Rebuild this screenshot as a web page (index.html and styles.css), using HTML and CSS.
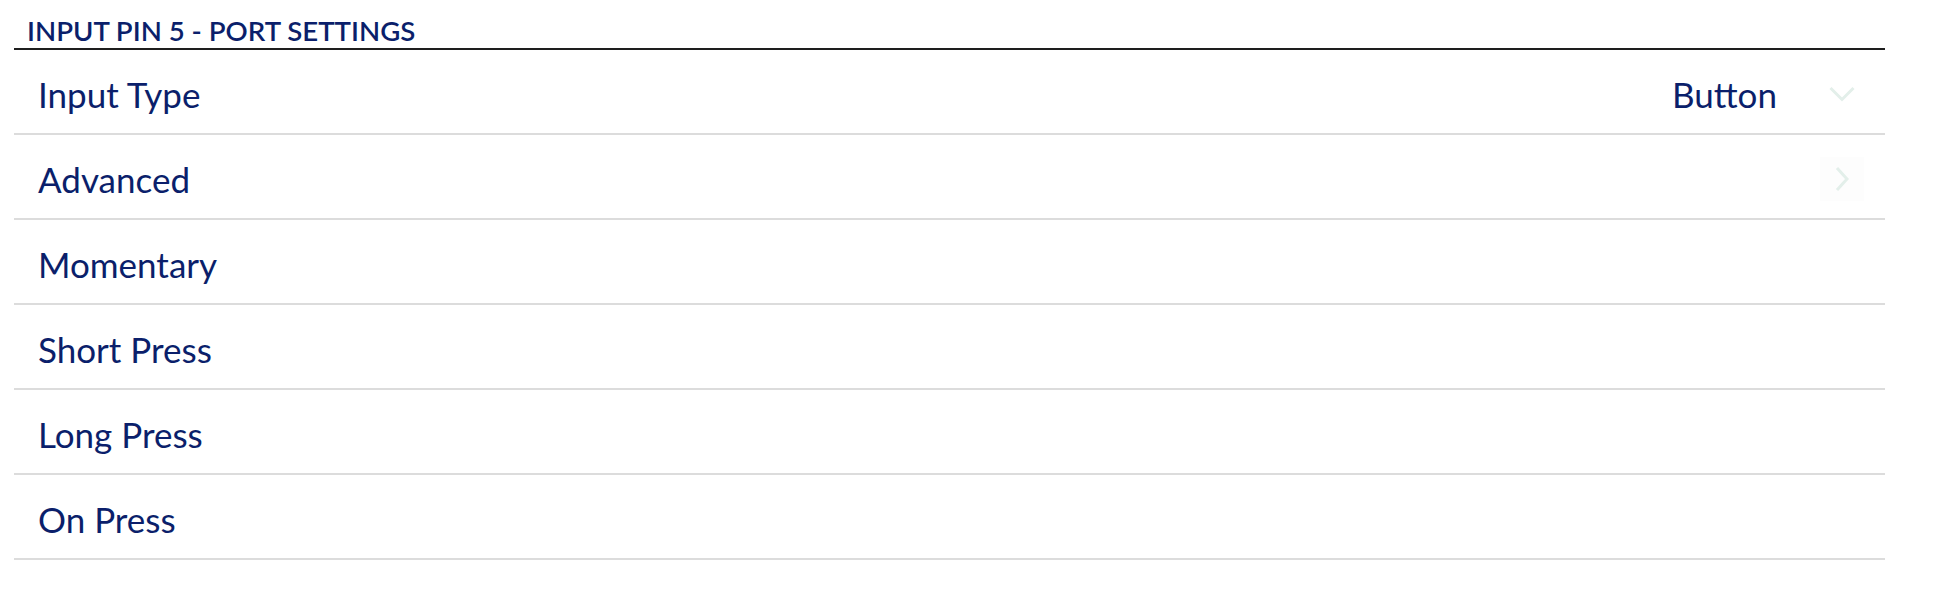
FILE: index.html
```html
<!DOCTYPE html>
<html>
<head>
<meta charset="utf-8">
<link rel="stylesheet" href="styles.css">
</head>
<body>
<div class="panel">
  <div class="section-title">INPUT PIN 5 - PORT SETTINGS</div>
  <div class="row">
    <span class="label">Input Type</span>
    <span class="value">Button</span>
    <span class="icon"><svg width="26" height="16" viewBox="0 0 26 16"><path d="M1.5 2 L13 13.5 L24.5 2" fill="none" stroke="#e3efea" stroke-width="3"/></svg></span>
  </div>
  <div class="row">
    <span class="label">Advanced</span>
    <span class="icon boxed"><svg width="14" height="26" viewBox="0 0 14 26"><path d="M2 2 L12 13 L2 24" fill="none" stroke="#e3efea" stroke-width="3"/></svg></span>
  </div>
  <div class="row"><span class="label">Momentary</span></div>
  <div class="row"><span class="label">Short Press</span></div>
  <div class="row"><span class="label">Long Press</span></div>
  <div class="row"><span class="label">On Press</span></div>
</div>
</body>
</html>
```
FILE: styles.css
```css
html, body {
  margin: 0;
  padding: 0;
  background: #ffffff;
}
body {
  font-family: Lato, "Open Sans", sans-serif;
  color: #0b1f6b;
}
.panel {
  margin-left: 14px;
  width: 1871px;
  padding-top: 15px;
}
.section-title {
  font-weight: 600;
  font-size: 27.6px;
  line-height: 32px;
  padding-left: 13px;
  padding-bottom: 1px;
  border-bottom: 2px solid #1e1e1e;
}
.row {
  box-sizing: border-box;
  display: flex;
  align-items: center;
  height: 85px;
  padding-top: 4px;
  border-bottom: 2px solid #dcdcdc;
  padding-left: 24px;
  padding-right: 21px;
}
.label {
  flex: 1;
  font-size: 35px;
}
.value {
  font-size: 35px;
  margin-right: 43px;
}
.icon {
  width: 44px;
  height: 44px;
  display: flex;
  align-items: center;
  justify-content: center;
}
.icon.boxed {
  background: #fdfdfd;
}
```
